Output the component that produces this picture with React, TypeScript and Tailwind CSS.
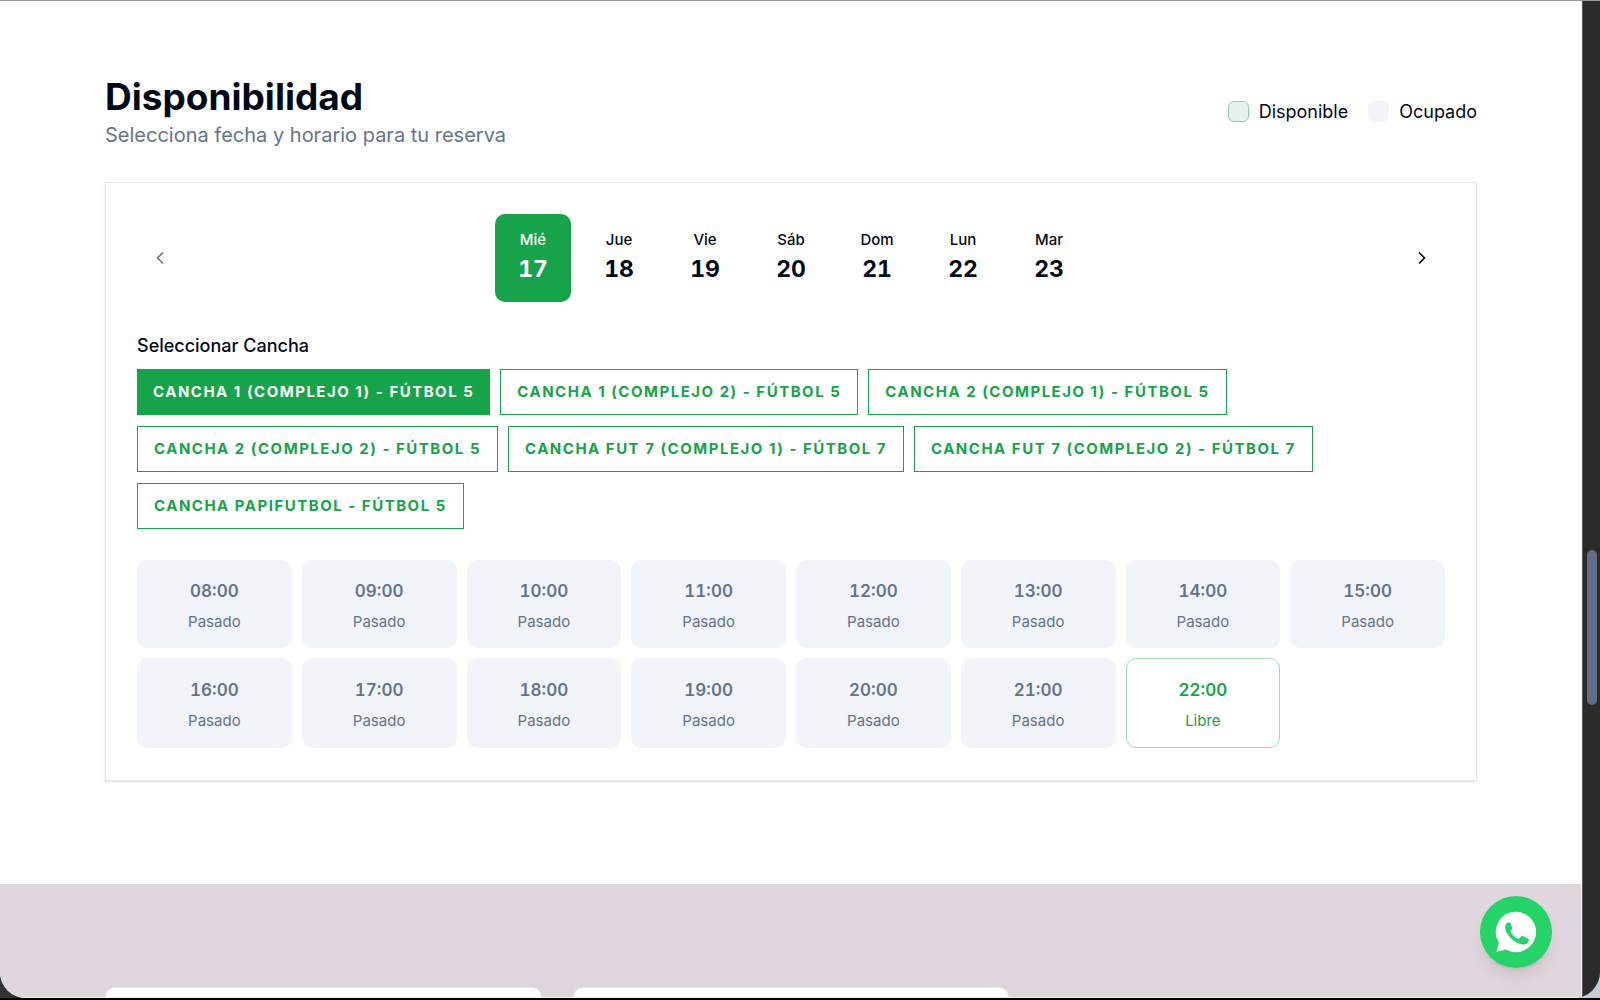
import React, { useState } from "react";
import { ChevronLeft, ChevronRight } from "lucide-react";

interface Day {
  name: string;
  number: number;
}

interface Slot {
  time: string;
  free: boolean;
}

const days: Day[] = [
  { name: "Mié", number: 17 },
  { name: "Jue", number: 18 },
  { name: "Vie", number: 19 },
  { name: "Sáb", number: 20 },
  { name: "Dom", number: 21 },
  { name: "Lun", number: 22 },
  { name: "Mar", number: 23 },
];

const courts: string[] = [
  "CANCHA 1 (COMPLEJO 1) - FÚTBOL 5",
  "CANCHA 1 (COMPLEJO 2) - FÚTBOL 5",
  "CANCHA 2 (COMPLEJO 1) - FÚTBOL 5",
  "CANCHA 2 (COMPLEJO 2) - FÚTBOL 5",
  "CANCHA FUT 7 (COMPLEJO 1) - FÚTBOL 7",
  "CANCHA FUT 7 (COMPLEJO 2) - FÚTBOL 7",
  "CANCHA PAPIFUTBOL - FÚTBOL 5",
];

const slots: Slot[] = Array.from({ length: 15 }, (_, i) => ({
  time: `${String(i + 8).padStart(2, "0")}:00`,
  free: i === 14,
}));

const WhatsAppIcon: React.FC = () => (
  <svg viewBox="0 0 42 42" className="size-[42px]" aria-hidden="true">
    <path
      fill="#fff"
      d="M21 .8A20.2 20.2 0 0 0 3.9 31.7L1.4 41l9.4-2.5A20.2 20.2 0 1 0 21 .8Z"
    />
    <path
      fill="#25d366"
      d="M11.900 12C12.800 11.300 13.900 11.300 14.800 11.500C15.400 11.700 15.600 12.300 15.800 12.900L17.300 16.600C17.600 17.500 17 18.300 15.600 19.900C15.200 20.400 15.400 20.700 15.700 21.200C17.500 24 19.800 26.200 23 27.600C23.600 27.900 24 27.900 24.400 27.400L26.200 25.200C26.600 24.700 27 24.700 27.600 24.900L33 27.500C33.700 27.800 33.900 28.100 33.800 28.900C33.600 31.400 32.300 32.600 30.300 33.200C27.800 33.900 25 33 22.300 31.700C17.800 29.600 14.300 26 11.800 21.900C10.400 19.600 10 17.600 10.200 15.700C10.300 14.200 10.900 12.900 11.900 12Z"
    />
  </svg>
);

const App: React.FC = () => {
  const [day, setDay] = useState<number>(17);
  const [court, setCourt] = useState<number>(0);

  return (
    <div className="flex h-screen overflow-hidden border-b-2 border-black bg-linear-to-r from-[#333333] from-50% to-[#c5cbd6] to-50% font-['Inter',sans-serif] text-[#020817]">
      <div className="flex flex-1 overflow-hidden rounded-b-[26px] border-t border-[#9a9ca3] bg-[#2a2a2a]">
        <main className="flex min-w-0 flex-1 flex-col border-r border-b border-[#f4f2f4] bg-white">
          <section className="pt-[72px] pr-[104px] pb-[103px] pl-[105px]">
            <div className="mb-8 flex items-center justify-between">
              <div>
                <h2 className="text-[37px] leading-[47px] font-bold">Disponibilidad</h2>
                <p className="text-xl leading-[30px] text-[#64748b]">
                  Selecciona fecha y horario para tu reserva
                </p>
              </div>
              <div className="flex items-center gap-5 text-lg">
                <div className="flex items-center gap-2.5">
                  <span className="size-[21px] rounded-md border border-[#8bd1a4] bg-[#e8f1ec]" />
                  Disponible
                </div>
                <div className="flex items-center gap-2.5">
                  <span className="size-[21px] rounded-md bg-[#f1f5f9]" />
                  Ocupado
                </div>
              </div>
            </div>

            <div className="border border-[#e2e8f0] p-[31px] pb-8 shadow-sm">
              <div className="mb-[31px] flex items-center justify-between">
                <button
                  type="button"
                  aria-label="Días anteriores"
                  className="flex size-[46px] items-center justify-center text-[#64748b]"
                >
                  <ChevronLeft size={20} />
                </button>
                <div className="flex gap-2.5">
                  {days.map((d) => (
                    <button
                      key={d.number}
                      type="button"
                      onClick={() => setDay(d.number)}
                      className={`flex h-[88px] w-[76px] flex-col items-center rounded-[10px] pt-[14px] ${
                        day === d.number ? "bg-[#16a34a] text-white" : ""
                      }`}
                    >
                      <span className="text-[15px] leading-6 font-medium">{d.name}</span>
                      <span className="text-[23px] leading-[34px] font-bold tabular-nums">{d.number}</span>
                    </button>
                  ))}
                </div>
                <button
                  type="button"
                  aria-label="Días siguientes"
                  className="flex size-[46px] items-center justify-center"
                >
                  <ChevronRight size={20} />
                </button>
              </div>

              <h3 className="mb-2.5 text-lg leading-[26px] font-medium">Seleccionar Cancha</h3>
              <div className="mb-[31px] flex flex-wrap gap-x-2.5 gap-y-[11px]">
                {courts.map((name, index) => (
                  <button
                    key={name}
                    type="button"
                    onClick={() => setCourt(index)}
                    className={`h-[46px] px-4 text-[15px] font-bold tracking-widest ${
                      court === index
                        ? "bg-[#16a34a] text-white shadow-xs"
                        : "border border-[#16a34a] text-[#16a34a]"
                    }`}
                  >
                    {name}
                  </button>
                ))}
              </div>

              <div className="grid grid-cols-8 gap-2.5">
                {slots.map(({ time, free }) => (
                  <button
                    key={time}
                    type="button"
                    disabled={!free}
                    className={`flex flex-col items-center justify-center rounded-[10px] py-[15px] ${
                      free
                        ? "border border-[#a2dab7] text-[#16a34a]"
                        : "bg-[#f1f5f9] text-[#64748b]"
                    }`}
                  >
                    <span className="mb-1 text-[17px] leading-8 font-semibold tabular-nums">{time}</span>
                    <span className="text-[15px] leading-[22px]">{free ? "Libre" : "Pasado"}</span>
                  </button>
                ))}
              </div>
            </div>
          </section>

          <section className="grid flex-1 grid-cols-3 gap-[31px] overflow-hidden bg-[#dfd6db] pt-[103px] pr-[104px] pl-[105px]">
            <div className="h-40 rounded-[10px] border border-[#e2e8f0] bg-white" />
            <div className="h-40 rounded-[10px] border border-[#e2e8f0] bg-white" />
          </section>
        </main>

        <div className="flex w-[18px] shrink-0 justify-center border-l border-[#5a5a5a]">
          <div className="mt-[549px] h-[155px] w-[10px] rounded-full border-2 border-[#6b6b6b] bg-[#5b6f95]" />
        </div>
      </div>

      <a
        href="#whatsapp"
        aria-label="WhatsApp"
        className="fixed right-12 bottom-8 flex size-[72px] items-center justify-center rounded-full bg-[#25d366] shadow-lg"
      >
        <WhatsAppIcon />
      </a>
    </div>
  );
};

export default App;
